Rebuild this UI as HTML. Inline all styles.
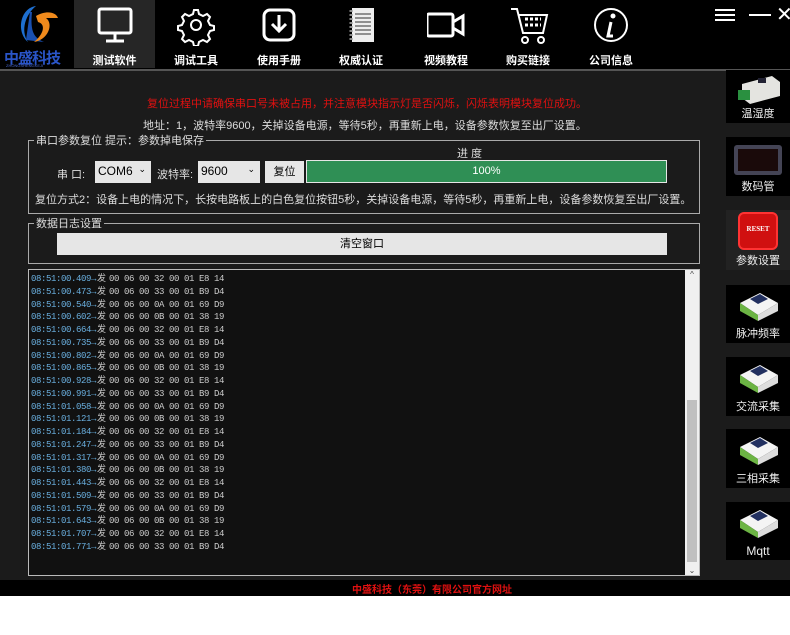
<!DOCTYPE html>
<html><head><meta charset="utf-8"><style>
*{margin:0;padding:0;box-sizing:border-box}
body{width:790px;height:635px;background:#fff;position:relative;overflow:hidden;font-family:"Liberation Sans","Noto Sans CJK SC",sans-serif;color:#ddd}
.a{position:absolute}
.hdr{left:0;top:0;width:790px;height:69px;background:#000}
.main{left:0;top:71px;width:790px;height:525px;background:#1b1b1b}
.line{left:0;top:69px;width:790px;height:2px;background:#555}
.nav{top:0;width:82px;height:68px;text-align:center;font-size:11px;font-weight:bold;color:#fff}
.nav span{position:absolute;left:0;right:0;top:52px}
.nav svg{position:absolute;left:22px;top:6px}
.sb{left:726px;width:64px;background:#000;text-align:center;font-size:11px;color:#eee}
.sb span{position:absolute;left:0;right:0;bottom:2px}
fieldset{position:absolute;border:1px solid #aaa;}
legend{font-size:11px;color:#ddd;margin-left:5px;padding:0 2px}
.t{font-size:11px;color:#ddd;white-space:nowrap}
.log{left:28px;top:269px;width:672px;height:307px;background:#111;border:1px solid #bbb;font-family:"Liberation Mono","Noto Sans CJK SC",monospace;font-size:9px;letter-spacing:-0.4px;line-height:12.75px;padding:3px 0 0 2px;color:#ccc}
.log b{font-weight:normal;color:#6ab0e0}
.log i{font-style:normal;letter-spacing:0;margin:0 3px 0 1px}
.dev{position:absolute;left:10px;top:4px;width:44px;height:34px}
</style></head><body>
<div class="a hdr"></div><div class="a line"></div><div class="a main"></div>
<svg class="a" style="left:10px;top:2px" width="52" height="46" viewBox="0 0 52 46"><path d="M26 4 C10 6 6 30 18 40 C10 28 16 12 26 4Z" fill="#1e6fd0"/><path d="M20 10 L16 38 L34 40 C24 36 20 30 22 10Z" fill="#1a50b0"/><path d="M26 14 C36 8 46 10 48 16 L36 16 C44 22 38 38 24 40 C34 32 36 22 28 20Z" fill="#f08a1c"/></svg>
<div class="a" style="left:4px;top:47px;font-size:15px;font-weight:bold;color:#2a55c8;letter-spacing:-1px">中盛科技</div>
<div class="a" style="left:6px;top:63px;font-size:4px;color:#4a6ad0">ZHONGSHENGKEJI</div>
<div class="a nav" style="left:74px;width:81px;background:#262626"><svg width="38" height="40" viewBox="0 0 38 40"><rect x="3" y="3" width="32" height="24" rx="2" fill="none" stroke="#fff" stroke-width="3"/><path d="M19 27v7M10 35h18" stroke="#fff" stroke-width="3"/></svg><span>测试软件</span></div>
<div class="a nav" style="left:155px"><svg width="38" height="40" viewBox="0 0 38 40"><circle cx="19" cy="19" r="5" fill="none" stroke="#fff" stroke-width="2"/><path d="M17 4h4l1 4 4 2 4-2 3 3-2 4 2 4 4 1v4l-4 1-2 4 2 4-3 3-4-2-4 2-1 4h-4l-1-4-4-2-4 2-3-3 2-4-2-4-4-1v-4l4-1 2-4-2-4 3-3 4 2 4-2z" fill="none" stroke="#fff" stroke-width="2"/></svg><span>调试工具</span></div>
<div class="a nav" style="left:238px"><svg width="38" height="40" viewBox="0 0 38 40"><rect x="4" y="4" width="30" height="30" rx="6" fill="none" stroke="#fff" stroke-width="3"/><path d="M19 9v16M12 18l7 7 7-7" fill="none" stroke="#fff" stroke-width="3"/></svg><span>使用手册</span></div>
<div class="a nav" style="left:320px"><svg width="38" height="40" viewBox="0 0 38 40"><rect x="10" y="2" width="22" height="34" fill="#eee"/><path d="M13 8h16M13 12h16M13 16h16M13 20h16M13 24h16M13 28h16" stroke="#333" stroke-width="1"/><path d="M9 4v30" stroke="#888" stroke-dasharray="2 2" stroke-width="3"/></svg><span>权威认证</span></div>
<div class="a nav" style="left:405px"><svg width="38" height="40" viewBox="0 0 38 40"><rect x="0" y="8" width="26" height="22" rx="2" fill="none" stroke="#fff" stroke-width="3"/><path d="M26 16l10-6v18l-10-6" fill="none" stroke="#fff" stroke-width="3"/></svg><span>视频教程</span></div>
<div class="a nav" style="left:487px"><svg width="40" height="40" viewBox="0 0 40 40"><path d="M2 3h6l6 24h20l4-18H10" fill="none" stroke="#fff" stroke-width="2"/><circle cx="16" cy="34" r="3" fill="none" stroke="#fff" stroke-width="2"/><circle cx="32" cy="34" r="3" fill="none" stroke="#fff" stroke-width="2"/><path d="M16 13h16M16 19h16" stroke="#fff" stroke-width="3" stroke-dasharray="3 2"/></svg><span>购买链接</span></div>
<div class="a nav" style="left:570px"><svg width="38" height="40" viewBox="0 0 38 40"><circle cx="19" cy="19" r="16" fill="none" stroke="#fff" stroke-width="2"/><circle cx="21" cy="10" r="2.5" fill="#fff"/><path d="M19 16l-3 14h5" fill="none" stroke="#fff" stroke-width="3"/></svg><span>公司信息</span></div>
<div class="a" style="left:715px;top:9px;width:20px;height:2px;background:#fff;box-shadow:0 5px #fff,0 10px #fff"></div>
<div class="a" style="left:749px;top:14px;width:22px;height:2px;background:#fff"></div>
<div class="a" style="left:776px;top:2px;font-size:20px;color:#fff">✕</div>

<div class="a t" style="left:147px;top:95px;color:#e01010">复位过程中请确保串口号未被占用，并注意模块指示灯是否闪烁，闪烁表明模块复位成功。</div>
<div class="a t" style="left:143px;top:117px">地址：1，波特率9600，关掉设备电源，等待5秒，再重新上电，设备参数恢复至出厂设置。</div>
<fieldset style="left:28px;top:132px;width:672px;height:82px"><legend>串口参数复位 提示：参数掉电保存</legend></fieldset>
<div class="a t" style="left:457px;top:145px">进 度</div>
<div class="a t" style="left:57px;top:166px">串 口:</div>
<div class="a" style="left:95px;top:161px;width:56px;height:22px;background:#e6e6e6;color:#000;font-size:12px;padding:3px 3px">COM6 <span style="position:absolute;right:5px;font-size:9px">⌄</span></div>
<div class="a t" style="left:157px;top:166px">波特率:</div>
<div class="a" style="left:198px;top:161px;width:62px;height:22px;background:#e6e6e6;color:#000;font-size:12px;padding:3px 3px">9600<span style="position:absolute;right:5px;font-size:9px">⌄</span></div>
<div class="a" style="left:265px;top:161px;width:39px;height:22px;background:#e6e6e6;color:#000;font-size:11px;text-align:center;line-height:22px">复位</div>
<div class="a" style="left:306px;top:160px;width:361px;height:23px;background:#e6e6e6;padding:1px"><div style="background:#2f8f55;height:21px;color:#fff;font-size:11px;text-align:center;line-height:21px">100%</div></div>
<div class="a t" style="left:35px;top:191px">复位方式2：设备上电的情况下，长按电路板上的白色复位按钮5秒，关掉设备电源，等待5秒，再重新上电，设备参数恢复至出厂设置。</div>
<fieldset style="left:28px;top:215px;width:672px;height:49px"><legend>数据日志设置</legend></fieldset>
<div class="a" style="left:57px;top:233px;width:610px;height:22px;background:#e6e6e6;color:#000;font-size:11px;text-align:center;line-height:22px">清空窗口</div>
<div class="a log">
<div><b>08:51:00.409→</b><i>发</i>00 06 00 32 00 01 E8 14</div>
<div><b>08:51:00.473→</b><i>发</i>00 06 00 33 00 01 B9 D4</div>
<div><b>08:51:00.540→</b><i>发</i>00 06 00 0A 00 01 69 D9</div>
<div><b>08:51:00.602→</b><i>发</i>00 06 00 0B 00 01 38 19</div>
<div><b>08:51:00.664→</b><i>发</i>00 06 00 32 00 01 E8 14</div>
<div><b>08:51:00.735→</b><i>发</i>00 06 00 33 00 01 B9 D4</div>
<div><b>08:51:00.802→</b><i>发</i>00 06 00 0A 00 01 69 D9</div>
<div><b>08:51:00.865→</b><i>发</i>00 06 00 0B 00 01 38 19</div>
<div><b>08:51:00.928→</b><i>发</i>00 06 00 32 00 01 E8 14</div>
<div><b>08:51:00.991→</b><i>发</i>00 06 00 33 00 01 B9 D4</div>
<div><b>08:51:01.058→</b><i>发</i>00 06 00 0A 00 01 69 D9</div>
<div><b>08:51:01.121→</b><i>发</i>00 06 00 0B 00 01 38 19</div>
<div><b>08:51:01.184→</b><i>发</i>00 06 00 32 00 01 E8 14</div>
<div><b>08:51:01.247→</b><i>发</i>00 06 00 33 00 01 B9 D4</div>
<div><b>08:51:01.317→</b><i>发</i>00 06 00 0A 00 01 69 D9</div>
<div><b>08:51:01.380→</b><i>发</i>00 06 00 0B 00 01 38 19</div>
<div><b>08:51:01.443→</b><i>发</i>00 06 00 32 00 01 E8 14</div>
<div><b>08:51:01.509→</b><i>发</i>00 06 00 33 00 01 B9 D4</div>
<div><b>08:51:01.579→</b><i>发</i>00 06 00 0A 00 01 69 D9</div>
<div><b>08:51:01.643→</b><i>发</i>00 06 00 0B 00 01 38 19</div>
<div><b>08:51:01.707→</b><i>发</i>00 06 00 32 00 01 E8 14</div>
<div><b>08:51:01.771→</b><i>发</i>00 06 00 33 00 01 B9 D4</div>
</div>
<div class="a" style="left:685px;top:270px;width:14px;height:305px;background:#f0f0f0"><div style="position:absolute;left:2px;top:130px;width:10px;height:162px;background:#c0c0c0"></div><div style="position:absolute;top:0;width:14px;text-align:center;font-size:8px;color:#444">^</div><div style="position:absolute;bottom:0;width:14px;text-align:center;font-size:8px;color:#444">⌄</div></div>

<div class="a sb" style="top:70px;height:53px"><svg class="dev" viewBox="0 0 44 34"><path d="M6 10l30-8 8 6v14l-30 8-8-6z" fill="#e4e4e0"/><rect x="2" y="16" width="12" height="10" fill="#2a9040"/><rect x="22" y="4" width="8" height="5" fill="#223"/></svg><span>温湿度</span></div>
<div class="a sb" style="top:137px;height:59px"><div style="position:absolute;left:8px;top:8px;width:48px;height:30px;background:#445;border-radius:3px;padding:4px"><div style="background:#1a0a0a;height:100%"></div></div><span>数码管</span></div>
<div class="a sb" style="top:210px;height:60px;background:#222"><div style="position:absolute;left:12px;top:2px;width:40px;height:38px;background:#d01010;border-radius:6px;border:2px solid #f33;color:#fff;font-size:7px;font-weight:bold;line-height:30px;font-family:'Liberation Serif',serif">RESET</div><span>参数设置</span></div>
<div class="a sb" style="top:285px;height:58px"><svg class="dev" viewBox="0 0 44 34"><path d="M4 14L24 4 42 14 22 26z" fill="#f4f4f4"/><path d="M4 14v8l18 10V26z" fill="#6cb444"/><path d="M22 26v6l20-10v-8z" fill="#ddd"/><path d="M14 10L24 5 32 10 22 15z" fill="#223060"/></svg><span>脉冲频率</span></div>
<div class="a sb" style="top:357px;height:59px"><svg class="dev" viewBox="0 0 44 34"><path d="M4 14L24 4 42 14 22 26z" fill="#f4f4f4"/><path d="M4 14v8l18 10V26z" fill="#6cb444"/><path d="M22 26v6l20-10v-8z" fill="#ddd"/><path d="M14 10L24 5 32 10 22 15z" fill="#223060"/></svg><span>交流采集</span></div>
<div class="a sb" style="top:429px;height:59px"><svg class="dev" viewBox="0 0 44 34"><path d="M4 14L24 4 42 14 22 26z" fill="#f4f4f4"/><path d="M4 14v8l18 10V26z" fill="#6cb444"/><path d="M22 26v6l20-10v-8z" fill="#ddd"/><path d="M14 10L24 5 32 10 22 15z" fill="#223060"/></svg><span>三相采集</span></div>
<div class="a sb" style="top:502px;height:58px"><svg class="dev" viewBox="0 0 44 34"><path d="M4 14L24 4 42 14 22 26z" fill="#f4f4f4"/><path d="M4 14v8l18 10V26z" fill="#6cb444"/><path d="M22 26v6l20-10v-8z" fill="#ddd"/><path d="M14 10L24 5 32 10 22 15z" fill="#223060"/></svg><span style="font-size:12px">Mqtt</span></div>

<div class="a" style="left:0;top:580px;width:790px;height:16px;background:#000"></div>
<div class="a" style="left:352px;top:581px;font-size:10px;font-weight:bold;color:#e01010">中盛科技（东莞）有限公司官方网址</div>
</body></html>
